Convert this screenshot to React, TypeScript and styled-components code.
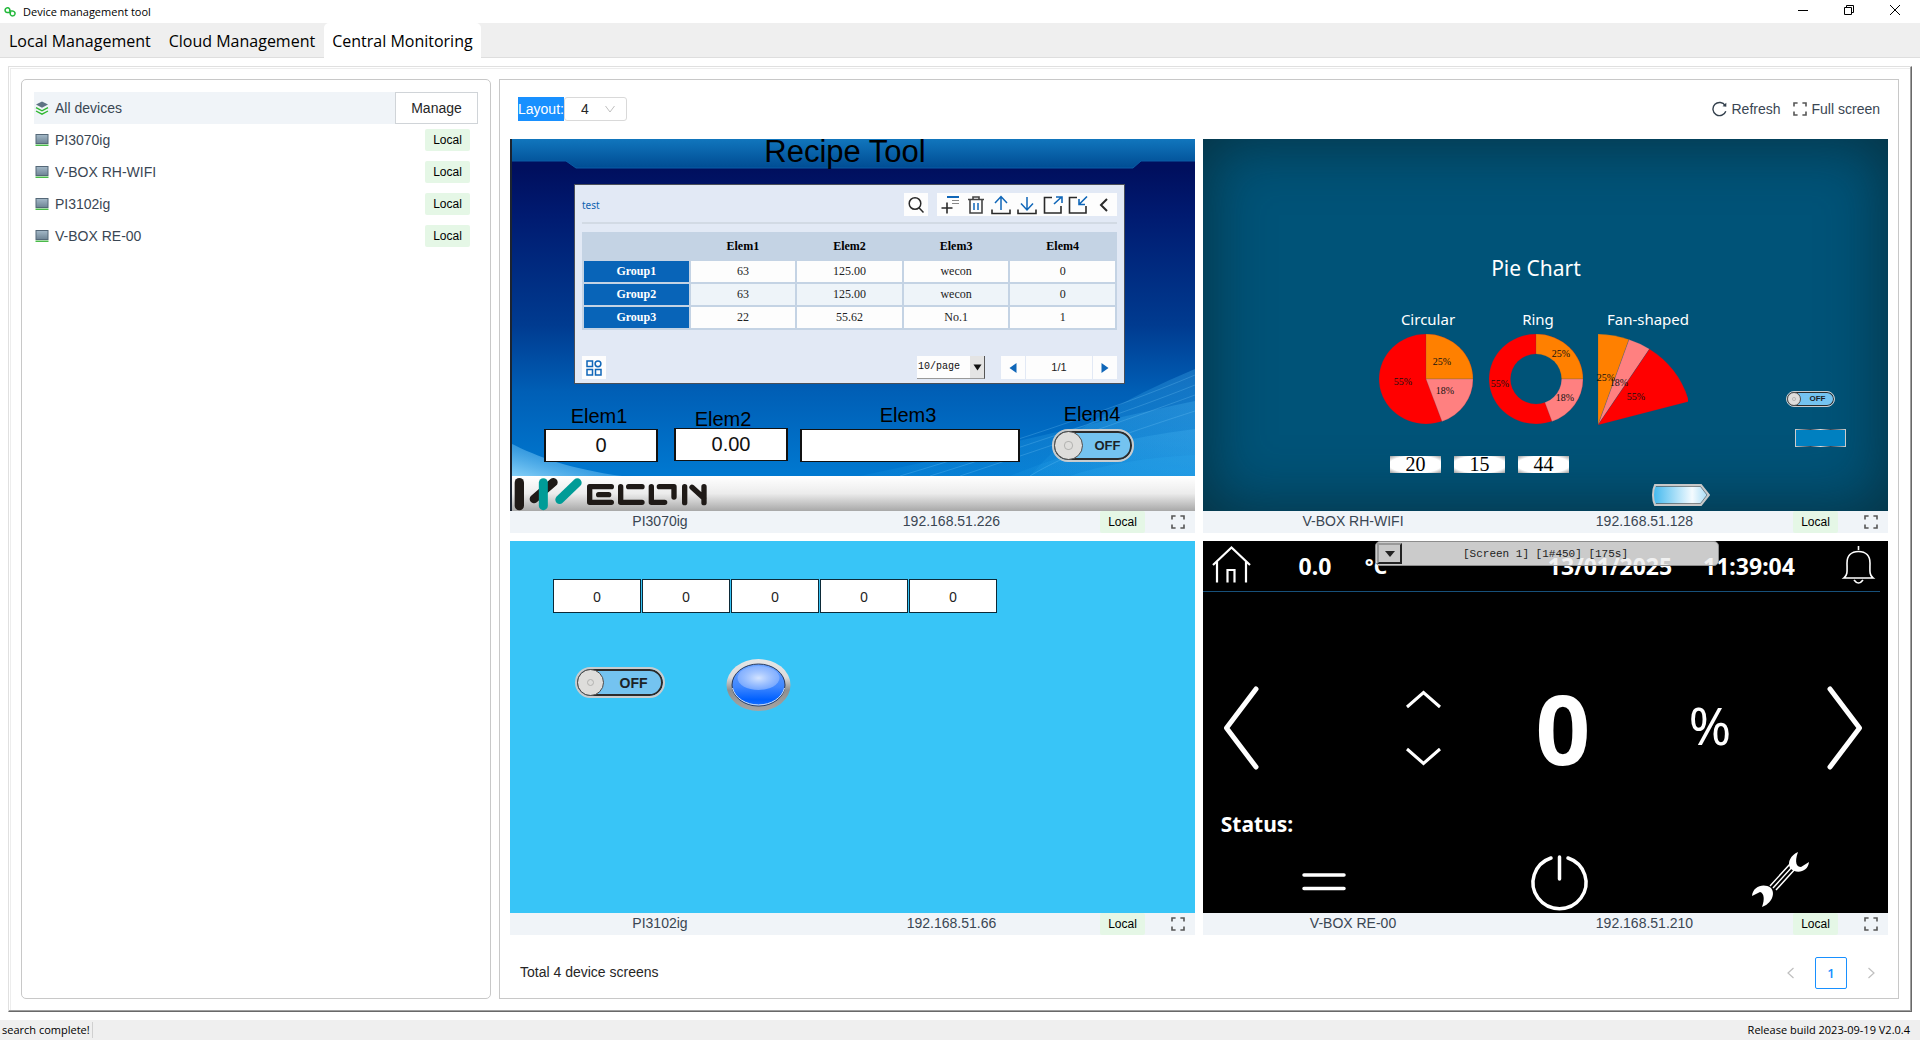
import React from 'react';
import styled, { createGlobalStyle } from 'styled-components';

const UI = `"Noto Sans", "Open Sans", sans-serif`;
const ARIAL = `"Liberation Sans", Arial, sans-serif`;
const SERIF = `"Liberation Serif", "Times New Roman", serif`;
const MONO = `"Liberation Mono", "Courier New", monospace`;

const GlobalStyle = createGlobalStyle`
  *, *::before, *::after { box-sizing: border-box; }
  html, body { margin: 0; padding: 0; background: #fff; }
  button, input, select { font: inherit; color: inherit; margin: 0; }
  svg { display: block; flex: none; }
`;

/* ---------- window chrome ---------- */

const Window = styled.div`
  display: flex;
  flex-direction: column;
  min-height: 100vh;
  background: #fff;
  color: #000;
  font: 14px/20px ${ARIAL};
`;

const TitleBar = styled.header`
  display: flex;
  align-items: center;
  height: 23px;
  padding-left: 4px;
  font: 11px/16px "Open Sans", sans-serif;
`;

const AppTitle = styled.h1`
  flex: 1;
  margin: 0;
  padding-left: 7px;
  font: inherit;
`;

const WindowButton = styled.button`
  display: grid;
  place-items: center;
  width: 46px;
  height: 20px;
  padding: 0;
  border: 0;
  background: none;
`;

const WindowButtons = styled.div`
  display: flex;
  align-self: flex-start;
  padding-right: 2px;
`;

const Tabs = styled.nav`
  display: flex;
  height: 35px;
  background: #efefef;
  border-bottom: 1px solid #dedede;
`;

const Tab = styled.a<{ $active?: boolean }>`
  display: flex;
  align-items: center;
  padding: 1px 8px 0;
  color: #000;
  text-decoration: none;
  font: 16px/24px "Open Sans", sans-serif;
  border: 1px solid ${p => (p.$active ? '#c4c4c4 #fff transparent #b4b4b4' : 'transparent')};
  border-color: ${p => (p.$active ? '#c4c4c4 #fff #fff #b4b4b4' : 'transparent')};
  border-radius: 5px 5px 0 0;
  background: ${p => (p.$active ? '#fff' : 'transparent')};
  margin-bottom: -1px;
`;

const Main = styled.main`
  flex: 1;
  display: flex;
  padding: 8px;
`;

const Frame = styled.div`
  flex: 1;
  display: flex;
  border: 1px solid;
  border-color: #e0e0e0 #696969 #696969 #e0e0e0;
  box-shadow: inset -1px -1px 0 #a0a0a0, inset 1px 1px 0 #fff, inset 2px 2px 0 #ededed;
  padding: 12px;
  gap: 8px;
`;

const StatusBar = styled.footer`
  display: flex;
  justify-content: space-between;
  align-items: center;
  height: 20px;
  padding-right: 10px;
  background: #efefef;
  font: 11px/16px "Open Sans", sans-serif;
`;

const StatusMessage = styled.span`
  padding: 0 2px;
  border-right: 1px solid #d0d0d0;
`;

/* ---------- device list ---------- */

const Sidebar = styled.aside`
  flex: 0 0 470px;
  padding: 12px;
  border: 1px solid #c8c8c8;
  border-radius: 5px;
  color: #3a4653;
`;

const ListHead = styled.div`
  display: flex;
  align-items: center;
  height: 32px;
  padding-left: 1px;
  background: #f0f4f8;
`;

const RowLabel = styled.span`
  flex: 1;
  padding-left: 6px;
`;

const ManageButton = styled.button`
  width: 83px;
  height: 32px;
  border: 1px solid #d0d4d8;
  background: #fff;
  color: #262626;
`;

const List = styled.ul`
  list-style: none;
  margin: 0;
  padding: 0;
`;

const ListRow = styled.li`
  display: flex;
  align-items: center;
  height: 32px;
  padding: 0 8px 0 1px;
`;

const Tag = styled.span`
  display: block;
  width: 45px;
  height: 22px;
  border-radius: 2px;
  background: #e5f7e6;
  color: #000;
  font-size: 12px;
  line-height: 22px;
  text-align: center;
`;

/* ---------- monitoring panel ---------- */

const Panel = styled.section`
  flex: 1;
  display: flex;
  flex-direction: column;
  padding: 0 10px 9px;
  border: 1px solid #c8c8c8;
`;

const Toolbar = styled.div`
  display: flex;
  align-items: center;
  height: 59px;
  padding: 0 8px 1px;
`;

const LayoutLabel = styled.label`
  height: 24px;
  line-height: 24px;
  background: #1890ff;
  color: #fff;
`;

const SelectBox = styled.span`
  position: relative;
  flex: 1;
  height: 24px;
`;

const LayoutSelect = styled.select`
  appearance: none;
  width: 63px;
  height: 24px;
  padding: 0 16px;
  border: 1px solid #d9d9d9;
  border-radius: 3px;
  background: #fff;
  color: #262626;
`;

const SelectArrow = styled.svg`
  position: absolute;
  left: 41px;
  top: 7px;
  pointer-events: none;
`;

const ToolButton = styled.button`
  display: flex;
  align-items: center;
  gap: 5px;
  margin-left: 12px;
  padding: 0;
  border: 0;
  background: none;
  color: #3a4653;
`;

const Screens = styled.div`
  flex: 1;
  display: grid;
  grid-template-columns: 1fr 1fr;
  grid-template-rows: 1fr 1fr;
  gap: 8px;
`;

const Card = styled.article`
  display: flex;
  flex-direction: column;
  min-width: 0;
  min-height: 380px;
`;

const CardFooter = styled.footer`
  display: grid;
  grid-template-columns: 300fr 283fr 52px 50px;
  align-items: center;
  height: 22px;
  background: #f0f4f8;
  color: #3a4653;
  text-align: center;
  ${Tag} { justify-self: end; }
`;

const CardText = styled.span`
  align-self: start;
`;

const IconButton = styled.button`
  display: flex;
  justify-content: flex-end;
  padding: 0 10px 0 0;
  border: 0;
  background: none;
`;

const PanelFooter = styled.div`
  display: flex;
  align-items: center;
  height: 54px;
  padding: 22px 1px 0 10px;
  color: #262626;
`;

const Total = styled.span`
  flex: 1;
  padding-bottom: 2px;
`;

const PageButton = styled.button<{ $current?: boolean }>`
  display: grid;
  place-items: center;
  width: 32px;
  height: 32px;
  margin-left: 8px;
  padding: 0;
  border: ${p => (p.$current ? '1px solid #1890ff' : '0')};
  border-radius: 2px;
  background: #fff;
  color: #1890ff;
  font: 600 13px/20px "Open Sans", sans-serif;
`;

/* ---------- HMI canvas: widgets keep their place on a 685 x 372 sheet ---------- */

const Canvas = styled.div<{ $bg: string }>`
  position: relative;
  flex: 1;
  overflow: hidden;
  background: ${p => p.$bg};
`;

const Backdrop = styled.svg`
  position: absolute;
  inset: 0;
  width: 100%;
  height: 100%;
`;

interface Place { $x: number; $y: number; $w: number; $h: number }

const Widget = styled.div<Place>`
  position: absolute;
  display: flex;
  align-items: center;
  justify-content: center;
  left: calc(100% * ${p => p.$x} / 685);
  top: calc(100% * ${p => p.$y} / 372);
  width: calc(100% * ${p => p.$w} / 685);
  height: calc(100% * ${p => p.$h} / 372);
`;

const Caption = styled(Widget)<{ $size: number; $font?: string; $color?: string; $bold?: boolean }>`
  margin: 0;
  color: ${p => p.$color || '#000'};
  font-family: ${p => p.$font || ARIAL};
  font-size: ${p => p.$size}px;
  font-weight: ${p => (p.$bold ? 700 : 400)};
  line-height: 1;
  white-space: nowrap;
`;

const Field = styled.input`
  width: 100%;
  height: 100%;
  min-width: 0;
  padding: 0;
  border: 1px solid #111;
  border-width: 1px 2px;
  background: #fff;
  color: #111;
  font: 20px/28px ${ARIAL};
  text-align: center;
`;

const CellField = styled.input`
  flex: 1;
  min-width: 0;
  height: 100%;
  padding: 0;
  border: 1px solid #0c2a38;
  background: #fff;
  color: #222;
  font: 14px/20px ${UI};
  text-align: center;
`;

const FieldRow = styled(Widget)`
  gap: 1px;
`;

const NumberBox = styled.output`
  width: 100%;
  height: 100%;
  background: radial-gradient(ellipse at 50% 50%, #fff 72%, #9a9a9a 100%);
  color: #000;
  font: 20px/17px ${SERIF};
  text-align: center;
`;

const SwitchBody = styled.button<{ $text: number }>`
  display: flex;
  align-items: center;
  width: 100%;
  height: 100%;
  padding: 0;
  border: ${p => (p.$text > 10 ? 2 : 1)}px solid #c9ccce;
  border-radius: 16px;
  background: #74c3f0;
  box-shadow: inset 0 0 0 ${p => (p.$text > 10 ? 2 : 1)}px #2b2b2b;
  color: #1c2226;
  font: bold ${p => p.$text}px/1 ${ARIAL};
`;

const Knob = styled.span`
  display: grid;
  place-items: center;
  height: 100%;
  aspect-ratio: 1;
  border: 1px solid #4a4a4a;
  border-radius: 50%;
  background: #dedddb;
  &::after {
    content: '';
    width: 30%;
    height: 30%;
    border: 1px solid #b2b2b0;
    border-radius: 50%;
  }
`;

const SwitchText = styled.span`
  flex: 1;
  text-align: center;
`;

const Switch = ({ size }: { size: number }) => (
  <SwitchBody $text={size} role="switch" aria-checked="false" type="button">
    <Knob />
    <SwitchText>OFF</SwitchText>
  </SwitchBody>
);

/* ---------- recipe dialog ---------- */

const Recipe = styled(Widget)`
  flex-direction: column;
  align-items: stretch;
  justify-content: flex-start;
  padding: 8px 7px 4px;
  border: 1px solid #4a4f58;
  background: #e2e9f5;
`;

const RecipeHead = styled.div`
  display: flex;
  height: 31px;
  margin-bottom: 8px;
  padding-bottom: 6px;
  border-bottom: 2px solid #d2dae4;
`;

const RecipeName = styled.span`
  flex: 1;
  color: #0f62b0;
  font: 10px/24px ${UI};
`;

const MiniButton = styled.button`
  display: grid;
  place-items: center;
  width: 24px;
  height: 23px;
  padding: 0;
  border: 0;
  background: #fdfdfd;
`;

const MiniBar = styled.div`
  display: flex;
  width: 180px;
  margin-left: 9px;
  ${MiniButton} { flex: 1; }
`;

const RecipeTable = styled.table`
  width: 100%;
  table-layout: fixed;
  border-collapse: collapse;
  font: 12px/14px ${SERIF};
  color: #222;
  th, td {
    height: 23px;
    padding: 0 0 1px;
    border: 2px solid #c4d3e4;
    text-align: center;
  }
  thead th { height: 27px; background: #c4d3e4; color: #000; }
  tbody th { background: #0864b8; color: #fff; }
  td { background: #fdfdfd; }
  tr:nth-child(2) td { background: #eef4f9; }
`;

const RecipeFoot = styled.div`
  display: flex;
  align-items: center;
  margin-top: auto;
  gap: 1px;
`;

const Spacer = styled.span`
  flex: 1;
`;

const PageSizeBox = styled.label`
  display: flex;
  width: 68px;
  margin-right: 15px;
  position: relative;
`;

const PageSize = styled.select`
  appearance: none;
  width: 100%;
  height: 23px;
  padding: 0 0 0 1px;
  border: 0;
  border-radius: 0;
  background: linear-gradient(90deg, #fdfdfd 53px, #e4e4e4 53px);
  border-right: 1px solid #555;
  border-bottom: 1px solid #999;
  color: #111;
  font: 10px/20px ${MONO};
`;

const PageSizeArrow = styled.svg`
  position: absolute;
  right: 3px;
  top: 8px;
  pointer-events: none;
`;

const PageCount = styled.span`
  width: 66px;
  height: 23px;
  background: #fdfdfd;
  color: #222;
  font: 11px/23px ${ARIAL};
  text-align: center;
`;

/* ---------- remote screen overlay ---------- */

const Banner = styled(Widget)`
  justify-content: flex-start;
  padding: 1px;
  border: 1px solid #8c8c8c;
  border-radius: 5px;
  background: rgba(239, 239, 239, 0.85);
  color: #222;
  font: 11px/16px ${MONO};
`;

const BannerButton = styled.button`
  display: grid;
  place-items: center;
  width: 25px;
  height: 100%;
  padding: 0;
  border: 2px solid;
  border-color: #999 #222 #222 #999;
  background: #c8c8c8;
`;

const BannerText = styled.span`
  flex: 1;
  text-align: center;
  padding-right: 28px;
`;

/* ---------- icons ---------- */

const ExpandIcon = () => (
  <svg width="14" height="14" viewBox="0 0 14 14" fill="none" stroke="#555" strokeWidth="1.6" aria-hidden="true">
    <path d="M1 4.6V1h3.6M9.4 1H13v3.6M13 9.4V13H9.4M4.6 13H1V9.4" />
  </svg>
);

const RefreshIcon = () => (
  <svg width="15" height="16" viewBox="0 0 15 16" fill="none" stroke="#33404d" strokeWidth="1.4" aria-hidden="true">
    <path d="M13.8 10.2A6.6 6.6 0 1 1 13.200 4.600" />
    <path d="M14.300 1.800v4l-3.800-.6z" fill="#33404d" stroke="none" />
  </svg>
);

const LayersIcon = () => (
  <svg width="14" height="14" viewBox="0 0 14 14" fill="none" aria-hidden="true">
    <path d="M7 .5L13 3.6 7 6.8 1 3.6z" fill="#5f7384" />
    <path d="M1 6.6l6 3.2 6-3.2M1 10l6 3.2 6-3.2" stroke="#2eb82e" strokeWidth="1.4" />
  </svg>
);

const ScreenIcon = () => (
  <svg width="14" height="12" viewBox="0 0 14 12" aria-hidden="true">
    <defs>
      <linearGradient id="scr" x1="0" y1="0" x2="0" y2="1">
        <stop offset="0" stopColor="#a5bac9" />
        <stop offset="1" stopColor="#6e8494" />
      </linearGradient>
    </defs>
    <rect x="1" y=".5" width="12" height="9" fill="url(#scr)" stroke="#556878" />
    <rect x=".5" y="10.6" width="13" height="1.200" fill="#1faa1f" />
  </svg>
);

const AppIcon = () => (
  <svg width="12" height="12" viewBox="0 0 12 12" fill="none" stroke="#22b83a" strokeWidth="1.500" aria-hidden="true">
    <path d="M3.200 6.600C1.200 6 .6 4.400 1.500 2.900 2.400 1.400 4.600 1.400 5.500 2.800 6 3.600 6 4.600 5.400 5.600" />
    <path d="M8.600 4.900C10.800 5.300 11.500 7 10.700 8.600 9.800 10.200 7.600 10.300 6.600 8.900 6 8 6.100 6.900 6.800 6" />
    <path d="M3 6.600h3.800M5.400 4.900h3.400" />
  </svg>
);

const Chevron = ({ d }: { d: string }) => (
  <svg width="12" height="12" viewBox="0 0 12 12" fill="none" stroke="#bfbfbf" strokeWidth="1.2" aria-hidden="true">
    <path d={d} />
  </svg>
);

const INK = '#2a2a2a';
const BLUE = '#0f66b8';

const recipeTools = [
  { name: 'Add', art: <><path d="M7 2h12" stroke={BLUE} strokeWidth="2" /><path d="M12 5.500h7M12 8.500h7" stroke="#888" strokeWidth="1.200" /><path d="M7 7.500v11M1.500 13h11" stroke={INK} strokeWidth="1.600" /></> },
  { name: 'Delete', art: <><path d="M2 4.500h16M7 4V2h6v2" stroke="#444" strokeWidth="1.600" /><path d="M4 5v13h12V5" stroke="#444" strokeWidth="1.600" /><path d="M8 8v7M12 8v7" stroke={BLUE} strokeWidth="1.500" /></> },
  { name: 'Upload', art: <><path d="M10 15V2M4 8l6-6.500L16 8" stroke={BLUE} strokeWidth="1.500" /><path d="M1 14.500V18.500h18v-4" stroke={INK} strokeWidth="1.600" /></> },
  { name: 'Download', art: <><path d="M10 2v13M4 8.500l6 6.500 6-6.500" stroke={BLUE} strokeWidth="1.500" /><path d="M1 14.500V18.500h18v-4" stroke={INK} strokeWidth="1.600" /></> },
  { name: 'Export', art: <><path d="M9 2.500H1.500V18H18v-7" stroke={INK} strokeWidth="1.600" /><path d="M11 9l7.500-7M13 2h6v6" stroke={BLUE} strokeWidth="1.600" /></> },
  { name: 'Import', art: <><path d="M9 2.500H1.500V18H18v-7" stroke={INK} strokeWidth="1.600" /><path d="M19 1.500L11.500 9M11 4v5.500h6" stroke={BLUE} strokeWidth="1.600" /></> },
  { name: 'Collapse', art: <path d="M13 4L7 10l6 6" stroke={INK} strokeWidth="2" /> },
];

const Mini = ({ children }: { children: React.ReactNode }) => (
  <svg width="20" height="20" viewBox="0 0 20 20" fill="none" aria-hidden="true">{children}</svg>
);

const WeconLogo = () => (
  <svg width="195" height="35" viewBox="25 246 585 105" fill="none" role="img" aria-label="Wecon">
    <g stroke="#1f1a17" strokeLinecap="round">
      <path d="M44 263V332" strokeWidth="28" />
      <path d="M88 312L146 262" strokeWidth="26" />
    </g>
    <g stroke="#009c97" strokeLinecap="round">
      <path d="M116 263V332" strokeWidth="27" />
      <path d="M165 314L218 263" strokeWidth="26" />
    </g>
    <g stroke="#1f1a17" strokeWidth="16" strokeLinejoin="round" strokeLinecap="round">
      <path d="M320 275H255V322H320M282 299H312" />
      <path d="M412 275H372M348 275V322H412" />
      <path d="M440 275V322H480M464 275H508V306" />
      <path d="M540 275V323M562 277L598 310M598 275V323" />
    </g>
  </svg>
);

/* ---------- screens ---------- */

const recipeRows = [
  ['Group1', '63', '125.00', 'wecon', '0'],
  ['Group2', '63', '125.00', 'wecon', '0'],
  ['Group3', '22', '55.62', 'No.1', '1'],
];

const RecipeScreen = () => (
  <Canvas $bg="linear-gradient(#000f5e 8%, #001a70 20%, #003b90 50%, #005fb6 68%, #0078d0 90%)">
    <Backdrop viewBox="0 0 685 372" preserveAspectRatio="none" aria-hidden="true">
      <defs>
        <linearGradient id="band" x1="0" y1="0" x2="0" y2="1">
          <stop offset="0" stopColor="#1176bd" /><stop offset="1" stopColor="#004c93" />
        </linearGradient>
        <linearGradient id="strip" x1="0" y1="0" x2="0" y2="1">
          <stop offset="0" stopColor="#fff" /><stop offset=".5" stopColor="#ececec" /><stop offset="1" stopColor="#a8a8a8" />
        </linearGradient>
        <linearGradient id="glow" x1="0" y1="1" x2="1" y2="0">
          <stop offset="0" stopColor="#8fd6fa" stopOpacity=".95" /><stop offset="1" stopColor="#1f8fe0" stopOpacity=".2" />
        </linearGradient>
        <linearGradient id="sweep" x1="0" y1="1" x2="1" y2="0">
          <stop offset="0" stopColor="#2fb0f0" stopOpacity=".1" /><stop offset="1" stopColor="#49b6f2" stopOpacity=".3" />
        </linearGradient>
      </defs>
      <path d="M0 0H685V22H631L623 29H66L56 22H0z" fill="url(#band)" />
      <path d="M0 22H56L66 29H623L631 22H685" fill="none" stroke="#0a5ca6" />
      <path d="M0 304C28 318 60 330 112 337H0z" fill="url(#glow)" />
      <path d="M685 230C610 262 560 290 520 337H685z" fill="url(#sweep)" />
      <path d="M685 262C590 282 470 312 350 337H685z" fill="url(#sweep)" />
      <path d="M685 290C620 298 560 312 500 337H685z" fill="url(#sweep)" />
      <path d="M685 316C640 318 590 326 560 337H685z" fill="#2ba4ea" fillOpacity=".3" />
      <g fill="none" stroke="#7fd0fa" strokeOpacity=".25">
        <path d="M685 236C600 272 480 310 390 337M685 246C610 276 500 312 420 337M685 256C620 280 520 314 450 337M685 272C630 290 560 312 520 337" />
      </g>
      <rect y="337" width="685" height="35" fill="url(#strip)" />
      <path d="M1 0V372" stroke="#1c2430" strokeWidth="2" />
    </Backdrop>
    <Caption as="h2" $x={235} $y={-22} $w={200} $h={70} $size={31}>Recipe Tool</Caption>
    <Recipe $x={64} $y={45} $w={551} $h={200}>
      <RecipeHead>
        <RecipeName>test</RecipeName>
        <MiniButton type="button" aria-label="Search">
          <svg width="18" height="18" viewBox="0 0 18 18" fill="none" stroke={INK} strokeWidth="1.500"><circle cx="8" cy="7.500" r="5.800" /><path d="M12.200 12l4.300 4.500" /></svg>
        </MiniButton>
        <MiniBar>
          {recipeTools.map(t => (
            <MiniButton key={t.name} type="button" aria-label={t.name}><Mini>{t.art}</Mini></MiniButton>
          ))}
        </MiniBar>
      </RecipeHead>
      <RecipeTable>
        <thead>
          <tr><th aria-label="Group" /><th>Elem1</th><th>Elem2</th><th>Elem3</th><th>Elem4</th></tr>
        </thead>
        <tbody>
          {recipeRows.map(([name, ...cells]) => (
            <tr key={name}>
              <th scope="row">{name}</th>
              {cells.map((c, i) => <td key={i}>{c}</td>)}
            </tr>
          ))}
        </tbody>
      </RecipeTable>
      <RecipeFoot>
        <MiniButton type="button" aria-label="Grid view">
          <svg width="18" height="18" viewBox="0 0 18 18" fill="none" stroke={BLUE} strokeWidth="1.500"><rect x="2" y="2" width="5.500" height="5.500" /><circle cx="13" cy="4.800" r="2.900" /><rect x="2" y="10.500" width="5.500" height="5.500" /><rect x="10.500" y="10.500" width="5.500" height="5.500" /></svg>
        </MiniButton>
        <Spacer />
        <PageSizeBox>
          <PageSize aria-label="Rows per page"><option>10/page</option></PageSize>
          <PageSizeArrow width="9" height="7" viewBox="0 0 9 7"><path d="M.5 .5h8L4.500 6.500z" fill="#111" /></PageSizeArrow>
        </PageSizeBox>
        <MiniButton type="button" aria-label="Previous page">
          <svg width="8" height="10" viewBox="0 0 8 10"><path d="M7.500 0v10L.5 5z" fill={BLUE} /></svg>
        </MiniButton>
        <PageCount>1/1</PageCount>
        <MiniButton type="button" aria-label="Next page">
          <svg width="8" height="10" viewBox="0 0 8 10"><path d="M.5 0v10L7.500 5z" fill={BLUE} /></svg>
        </MiniButton>
      </RecipeFoot>
    </Recipe>
    <Caption as="label" htmlFor="elem1" $x={49} $y={266} $w={80} $h={22} $size={20}>Elem1</Caption>
    <Caption as="label" htmlFor="elem2" $x={173} $y={269} $w={80} $h={22} $size={20}>Elem2</Caption>
    <Caption as="label" htmlFor="elem3" $x={358} $y={265} $w={80} $h={22} $size={20}>Elem3</Caption>
    <Caption $x={542} $y={264} $w={80} $h={22} $size={20}>Elem4</Caption>
    <Widget $x={34} $y={290} $w={114} $h={33}><Field id="elem1" defaultValue="0" /></Widget>
    <Widget $x={164} $y={289} $w={114} $h={33}><Field id="elem2" defaultValue="0.00" /></Widget>
    <Widget $x={290} $y={290} $w={220} $h={33}><Field id="elem3" defaultValue="" /></Widget>
    <Widget $x={542} $y={290} $w={82} $h={33}><Switch size={13} /></Widget>
    <Widget $x={3} $y={338} $w={195} $h={34}><WeconLogo /></Widget>
  </Canvas>
);

const PieDrawing = () => (
  <svg width="310" height="94" viewBox="1378 333 310 94" role="img" aria-label="Pie charts">
    <g stroke="#005378" strokeOpacity=".35" strokeWidth=".5">
      <ellipse cx="1426" cy="379" rx="47" ry="45" fill="#f00" />
      <path d="M1426 379V334A47 45 0 0 1 1473 379z" fill="#ff8000" />
      <path d="M1426 379H1473A47 45 0 0 1 1442 421.400z" fill="#ff8080" />
      <ellipse cx="1536" cy="379" rx="47" ry="45" fill="#f00" />
      <path d="M1536 379V334A47 45 0 0 1 1583 379z" fill="#ff8000" />
      <path d="M1536 379H1583A47 45 0 0 1 1552 421.400z" fill="#ff8080" />
      <ellipse cx="1536" cy="379" rx="25.500" ry="25" fill="#005378" />
      <path d="M1598 425V334A94 91 0 0 1 1629 339.500z" fill="#ff8000" />
      <path d="M1598 425L1629 339.500A94 91 0 0 1 1649.500 349z" fill="#ff8080" />
      <path d="M1598 425L1649.500 349A94 91 0 0 1 1689 401.500z" fill="#f00" />
    </g>
    <g fontFamily={SERIF} fontSize="10" textAnchor="middle" fill="#111">
      <text x="1442" y="365">25%</text><text x="1403" y="385">55%</text><text x="1445" y="394">18%</text>
      <text x="1561" y="357">25%</text><text x="1500" y="387">55%</text><text x="1565" y="401">18%</text>
      <text x="1606" y="381">25%</text><text x="1619" y="386">18%</text><text x="1636" y="400">55%</text>
    </g>
  </svg>
);

const Vignette = styled.div`
  position: absolute;
  inset: 0;
  box-shadow: inset 0 0 60px 4px rgba(8, 40, 50, 0.75);
`;

const PieScreen = () => (
  <Canvas $bg="#005378">
    <Vignette />
    <Caption $x={258} $y={115} $w={150} $h={28} $size={21} $font={UI} $color="#fff">Pie Chart</Caption>
    <Caption $x={175} $y={169} $w={100} $h={22} $size={15} $font={UI} $color="#fff">Circular</Caption>
    <Caption $x={285} $y={169} $w={100} $h={22} $size={15} $font={UI} $color="#fff">Ring</Caption>
    <Caption $x={395} $y={169} $w={100} $h={22} $size={15} $font={UI} $color="#fff">Fan-shaped</Caption>
    <Widget $x={175} $y={194} $w={310} $h={94}><PieDrawing /></Widget>
    {[['20', 187], ['15', 251], ['44', 315]].map(([v, x]) => (
      <Widget key={v} $x={x as number} $y={317} $w={51} $h={17}><NumberBox>{v}</NumberBox></Widget>
    ))}
    <Widget $x={583} $y={252} $w={49} $h={16}><Switch size={8} /></Widget>
    <Widget $x={592} $y={290} $w={51} $h={18}>
      <svg width="51" height="18" viewBox="0 0 51 18" aria-hidden="true">
        <defs><linearGradient id="metal"><stop offset="0" stopColor="#ccc" /><stop offset=".3" stopColor="#345" /><stop offset=".5" stopColor="#ddd" /><stop offset=".7" stopColor="#345" /><stop offset="1" stopColor="#ccc" /></linearGradient></defs>
        <rect x=".5" y=".5" width="50" height="17" fill="#0080c0" stroke="url(#metal)" />
      </svg>
    </Widget>
    <Widget $x={449} $y={345} $w={58} $h={22}>
      <svg width="58" height="22" viewBox="0 0 58 22" aria-hidden="true">
        <defs><linearGradient id="tag"><stop offset="0" stopColor="#41b8ee" /><stop offset=".7" stopColor="#f4fbff" /><stop offset="1" stopColor="#9fd8f4" /></linearGradient></defs>
        <path d="M3 1h46l8 10-8 10H3Q1 17 1 11T3 1z" fill="url(#tag)" stroke="#c8c8c8" strokeWidth="2" />
        <path d="M4 2.500h44.500l6.500 8.500-6.500 8.500H4" fill="none" stroke="#555" strokeWidth=".7" />
      </svg>
    </Widget>
  </Canvas>
);

const LampScreen = () => (
  <Canvas $bg="#38c5f7">
    <FieldRow $x={43} $y={38} $w={444} $h={34}>
      {[1, 2, 3, 4, 5].map(n => <CellField key={n} aria-label={`Value ${n}`} defaultValue="0" />)}
    </FieldRow>
    <Widget $x={65} $y={126} $w={90} $h={31}><Switch size={14} /></Widget>
    <Widget $x={216} $y={118} $w={65} $h={52}>
      <svg width="65" height="52" viewBox="0 0 65 52" role="img" aria-label="Lamp">
        <defs>
          <linearGradient id="rim" x1="0" y1="0" x2="0" y2="1"><stop offset="0" stopColor="#e6e6e6" /><stop offset=".35" stopColor="#dcdcdc" /><stop offset=".6" stopColor="#8f8f8f" /><stop offset="1" stopColor="#a5a5a5" /></linearGradient>
          <linearGradient id="lens" x1="0" y1="0" x2="0" y2="1"><stop offset="0" stopColor="#6ea5ff" /><stop offset=".55" stopColor="#3d86ff" /><stop offset=".85" stopColor="#0060ff" /><stop offset="1" stopColor="#1a70ff" /></linearGradient>
          <radialGradient id="shine"><stop offset="0" stopColor="#d4e4ff" /><stop offset="1" stopColor="#9dbfff" stopOpacity=".6" /></radialGradient>
        </defs>
        <ellipse cx="32.500" cy="26" rx="32" ry="26" fill="url(#rim)" />
        <ellipse cx="32.500" cy="26" rx="26.500" ry="21" fill="url(#lens)" stroke="#26385c" />
        <path d="M6.500 29A26.500 21 0 0 0 58.500 29" fill="none" stroke="#d8e4f4" />
        <ellipse cx="32.500" cy="19" rx="21" ry="12" fill="url(#shine)" />
      </svg>
    </Widget>
  </Canvas>
);

const ControlScreen = () => (
  <Canvas $bg="#000">
    <Caption $x={77} $y={13} $w={70} $h={24} $size={23} $font={UI} $color="#fff" $bold>0.0</Caption>
    <Caption $x={153} $y={13} $w={40} $h={24} $size={21} $font={UI} $color="#fff" $bold>°C</Caption>
    <Caption $x={337} $y={13} $w={140} $h={24} $size={23} $font={UI} $color="#fff" $bold>13/01/2025</Caption>
    <Caption $x={486} $y={13} $w={120} $h={24} $size={23} $font={UI} $color="#fff" $bold>11:39:04</Caption>
    <Caption $x={310} $y={137} $w={100} $h={100} $size={96} $font={UI} $color="#fff" $bold>0</Caption>
    <Caption $x={476} $y={154} $w={62} $h={60} $size={51} $font={UI} $color="#fff">%</Caption>
    <Caption $x={14} $y={270} $w={80} $h={26} $size={21} $font={UI} $color="#fff" $bold>Status:</Caption>
    <Backdrop viewBox="1203 541 685 372" preserveAspectRatio="none" fill="none" stroke="#fff" aria-hidden="true">
      <path d="M1203 591.500H1880" stroke="#17507a" />
      <path d="M1213 565L1231.500 547.500 1250 565M1217 562V582.500M1246 562V582.500M1227.500 582.500V570H1234.500V582.500" strokeWidth="2.200" />
      <path d="M1844 578H1873C1869 575 1870 570 1870 563 1870 556 1866 551.500 1858.500 551.500S1847 556 1847 563C1847 570 1848 575 1844 578zM1858.500 546V550M1854 580Q1858.500 586 1863 580" strokeWidth="1.600" />
      <path d="M1256 689L1226.500 728 1256 767M1830 689L1859.500 728 1830 767" strokeWidth="5" strokeLinejoin="round" strokeLinecap="round" />
      <path d="M1407 707L1423.500 692.500 1440 707M1407 749L1423.500 763.500 1440 749" strokeWidth="3" />
      <path d="M1304 875H1344M1304 888.500H1344" strokeWidth="3.500" strokeLinecap="round" />
      <path d="M1551 858A26.500 26 0 1 0 1568 858" strokeWidth="3.500" strokeLinecap="round" />
      <path d="M1559.500 857V879" strokeWidth="3.500" strokeLinecap="round" />
      <path d="M1770 886L1790 864M1776 890L1796 868M1773 888L1793 866" strokeWidth="1.500" />
      <path d="M1798 852C1791 855 1787 862 1790 868 1795 874 1808 873 1809 862L1801 867C1797 867 1794 863 1798 852z" fill="#fff" stroke="none" />
      <path d="M1752 896C1753 886 1764 883 1771 888 1776 894 1771 904 1762 907 1765 899 1764 893 1760 892z" fill="#fff" stroke="none" />
    </Backdrop>
    <Banner $x={172} $y={0} $w={344} $h={25}>
      <BannerButton type="button" aria-label="Screen menu">
        <svg width="10" height="6" viewBox="0 0 10 6"><path d="M0 0h10L5 6z" fill="#222" /></svg>
      </BannerButton>
      <BannerText>[Screen 1] [1#450] [175s]</BannerText>
    </Banner>
  </Canvas>
);

const devices = [
  { name: 'PI3070ig', ip: '192.168.51.226', View: RecipeScreen },
  { name: 'V-BOX RH-WIFI', ip: '192.168.51.128', View: PieScreen },
  { name: 'PI3102ig', ip: '192.168.51.66', View: LampScreen },
  { name: 'V-BOX RE-00', ip: '192.168.51.210', View: ControlScreen },
];

export default function App() {
  return (
    <Window>
      <GlobalStyle />
      <TitleBar>
        <AppIcon />
        <AppTitle>Device management tool</AppTitle>
        <WindowButtons>
          <WindowButton type="button" aria-label="Minimize"><svg width="10" height="10" stroke="#000"><path d="M0 5.500h10" /></svg></WindowButton>
          <WindowButton type="button" aria-label="Restore"><svg width="10" height="10" fill="none" stroke="#000"><path d="M.5 2.500h7v7h-7zM2.500 2.500v-2h7v7h-2" /></svg></WindowButton>
          <WindowButton type="button" aria-label="Close"><svg width="10" height="10" stroke="#000"><path d="M0 0l10 10M10 0L0 10" /></svg></WindowButton>
        </WindowButtons>
      </TitleBar>
      <Tabs>
        <Tab href="#local">Local Management</Tab>
        <Tab href="#cloud">Cloud Management</Tab>
        <Tab href="#central" $active>Central Monitoring</Tab>
      </Tabs>
      <Main>
        <Frame>
          <Sidebar>
            <ListHead>
              <LayersIcon />
              <RowLabel>All devices</RowLabel>
              <ManageButton type="button">Manage</ManageButton>
            </ListHead>
            <List>
              {devices.map(d => (
                <ListRow key={d.name}>
                  <ScreenIcon />
                  <RowLabel>{d.name}</RowLabel>
                  <Tag>Local</Tag>
                </ListRow>
              ))}
            </List>
          </Sidebar>
          <Panel>
            <Toolbar>
              <LayoutLabel htmlFor="layout">Layout:</LayoutLabel>
              <SelectBox>
                <LayoutSelect id="layout" defaultValue="4"><option>4</option></LayoutSelect>
                <SelectArrow width="10" height="10" viewBox="0 0 10 10" fill="none" stroke="#bfbfbf"><path d="M.5 2L5 8l4.500-6" /></SelectArrow>
              </SelectBox>
              <ToolButton type="button"><RefreshIcon />Refresh</ToolButton>
              <ToolButton type="button"><ExpandIcon />Full screen</ToolButton>
            </Toolbar>
            <Screens>
              {devices.map(({ name, ip, View }) => (
                <Card key={name}>
                  <View />
                  <CardFooter>
                    <CardText>{name}</CardText>
                    <CardText>{ip}</CardText>
                    <Tag>Local</Tag>
                    <IconButton type="button" aria-label={`Full screen ${name}`}><ExpandIcon /></IconButton>
                  </CardFooter>
                </Card>
              ))}
            </Screens>
            <PanelFooter>
              <Total>Total 4 device screens</Total>
              <PageButton type="button" aria-label="Previous page"><Chevron d="M8.500 1L3 6l5.500 5" /></PageButton>
              <PageButton type="button" $current>1</PageButton>
              <PageButton type="button" aria-label="Next page"><Chevron d="M3.500 1L9 6l-5.500 5" /></PageButton>
            </PanelFooter>
          </Panel>
        </Frame>
      </Main>
      <StatusBar>
        <StatusMessage>search complete!</StatusMessage>
        <span>Release build 2023-09-19 V2.0.4</span>
      </StatusBar>
    </Window>
  );
}
